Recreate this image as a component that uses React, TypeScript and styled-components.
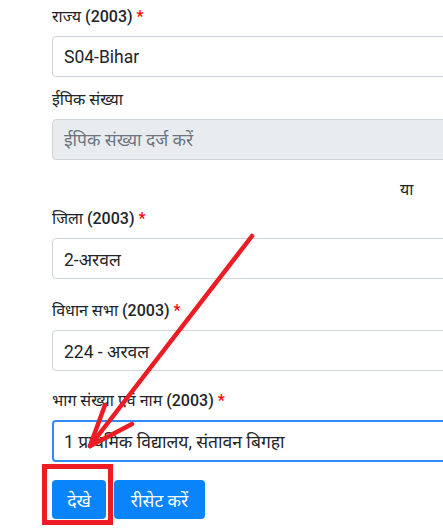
import React from 'react';
import styled, { createGlobalStyle } from 'styled-components';

const GlobalStyle = createGlobalStyle`
    html, body {
        margin: 0;
        padding: 0;
        background: #fff;
        overflow: hidden;
    }
    body {
        font-family: Roboto, "Noto Sans", "DejaVu Sans", sans-serif;
        font-size: 16px;
        color: #212529;
    }
`;

const Page = styled.div`
    position: relative;
    width: 443px;
    height: 528px;
    overflow: hidden;
    padding: 5px 0 0 52px;
    box-sizing: border-box;
`;

const FormGroup = styled.div<{ $top: number }>`
    margin-top: ${(p) => p.$top}px;
    width: 480px;
`;

const Label = styled.label`
    display: block;
    height: 24px;
    line-height: 24px;
    margin-bottom: 7px;
    font-size: 16px;
    color: #212529;
    white-space: nowrap;
`;

const Year = styled.span`
    font-weight: 500;
`;

const Required = styled.span`
    color: #ff0000;
    font-weight: 500;
`;

const Input = styled.input<{ $focused?: boolean }>`
    display: block;
    width: 100%;
    box-sizing: border-box;
    height: ${(p) => (p.$focused ? 42 : 41)}px;
    padding: 0 ${(p) => (p.$focused ? 10 : 11)}px;
    font-family: inherit;
    font-size: 17.5px;
    color: #212529;
    background: #fff;
    border: ${(p) => (p.$focused ? '2px solid #2f8cff' : '1px solid #ced4da')};
    border-radius: 4px;
    outline: none;

    &:disabled {
        background: #e9ecef;
    }

    &::placeholder {
        color: #6c757d;
    }
`;

const OrRow = styled.div`
    margin-top: 18px;
    height: 24px;
    line-height: 24px;
    padding-left: 348px;
    font-size: 16px;
`;

const ButtonRow = styled.div`
    display: flex;
    gap: 8px;
    margin-top: 18px;
`;

const Button = styled.button<{ $width: number }>`
    width: ${(p) => p.$width}px;
    height: 39px;
    padding: 0;
    border: none;
    border-radius: 4px;
    background: #0a84fb;
    color: #fff;
    font-family: inherit;
    font-size: 17.5px;
    cursor: pointer;
`;

const Annotation = styled.svg`
    position: absolute;
    top: 0;
    left: 0;
    pointer-events: none;
`;

const App: React.FC = () => {
    return (
        <Page>
            <GlobalStyle />
            <FormGroup $top={0}>
                <Label>
                    राज्य <Year>(2003)</Year> <Required>*</Required>
                </Label>
                <Input readOnly defaultValue="S04-Bihar" />
            </FormGroup>
            <FormGroup $top={11}>
                <Label>ईपिक संख्या</Label>
                <Input disabled placeholder="ईपिक संख्या दर्ज करें" />
            </FormGroup>
            <OrRow>या</OrRow>
            <FormGroup $top={5}>
                <Label>
                    जिला <Year>(2003)</Year> <Required>*</Required>
                </Label>
                <Input readOnly defaultValue="2-अरवल" />
            </FormGroup>
            <FormGroup $top={20}>
                <Label>
                    विधान सभा <Year>(2003)</Year> <Required>*</Required>
                </Label>
                <Input readOnly defaultValue="224 - अरवल" />
            </FormGroup>
            <FormGroup $top={18}>
                <Label>
                    भाग संख्या एवं नाम <Year>(2003)</Year> <Required>*</Required>
                </Label>
                <Input $focused readOnly defaultValue="1 प्राथमिक विद्यालय, संतावन बिगहा" />
            </FormGroup>
            <ButtonRow>
                <Button $width={54}>देखे</Button>
                <Button $width={91}>रीसेट करें</Button>
            </ButtonRow>

            {/* red arrow + box drawn on top of the screenshot */}
            <Annotation width="443" height="528" viewBox="0 0 443 528">
                <g stroke="#ec1c24" strokeWidth="4.5" strokeLinecap="round" fill="none">
                    <line x1="252" y1="236" x2="90" y2="446" />
                    <line x1="90" y1="446" x2="105" y2="405" />
                    <line x1="90" y1="446" x2="132" y2="424" />
                </g>
                <rect x="44.5" y="466.5" width="66" height="56" stroke="#ec1c24" strokeWidth="5" fill="none" />
            </Annotation>
        </Page>
    );
};

export default App;
